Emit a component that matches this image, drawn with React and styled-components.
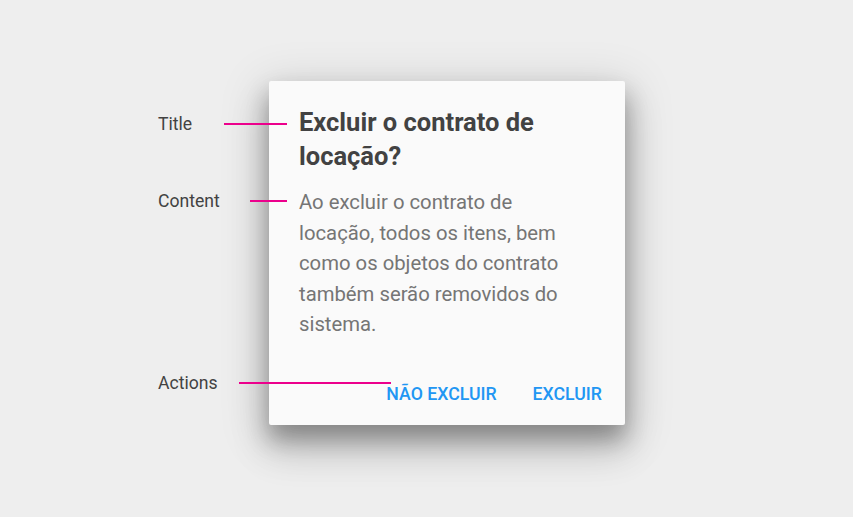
import React from 'react'
import styled, { createGlobalStyle } from 'styled-components'

const GlobalStyle = createGlobalStyle`
  html, body {
    margin: 0;
    background: #eeeeee;
    font-family: Roboto, "Noto Sans", sans-serif;
  }
`

const Page = styled.div`
  width: 853px;
  height: 517px;
  box-sizing: border-box;
  padding: 81px 0 0 269px;
`

const Stage = styled.div`
  position: relative;
  width: 356px;
`

const Dialog = styled.div`
  width: 356px;
  height: 344px;
  box-sizing: border-box;
  background: #fafafa;
  border-radius: 2px;
  box-shadow: 0 24px 38px 3px rgba(0, 0, 0, 0.14), 0 9px 46px 8px rgba(0, 0, 0, 0.12),
    0 14px 22px rgba(0, 0, 0, 0.28);
  display: flex;
  flex-direction: column;
  padding: 24px 23px 0 30px;
`

const Title = styled.h2`
  margin: 0;
  font-size: 25.5px;
  font-weight: 700;
  line-height: 34px;
  color: #424242;
`

const Content = styled.p`
  margin: 14px 0 0;
  font-size: 20.3px;
  line-height: 30.5px;
  color: #757575;
  padding-right: 20px;
`

const Actions = styled.div`
  margin-top: 42px;
  display: flex;
  justify-content: flex-end;
  gap: 36px;
`

const ActionButton = styled.button`
  border: 0;
  background: none;
  padding: 0;
  font-family: Roboto, sans-serif;
  font-size: 17.7px;
  font-weight: 500;
  line-height: 24px;
  color: #2196f3;
  text-transform: uppercase;
  cursor: pointer;
`

const Note = styled.div`
  position: absolute;
  left: -111px;
  top: ${p => p.top}px;
  height: 24px;
  display: flex;
  align-items: center;
`

const NoteLabel = styled.span`
  font-size: 17.6px;
  line-height: 24px;
  color: #424242;
  width: ${p => p.lead}px;
`

const NoteLine = styled.span`
  display: block;
  height: 2px;
  width: ${p => p.len}px;
  background: #ec008c;
`

const notes = [
  { label: 'Title', top: 31, lead: 66, len: 63 },
  { label: 'Content', top: 108, lead: 92, len: 37 },
  { label: 'Actions', top: 290, lead: 81, len: 152 },
]

export default function App() {
  return (
    <>
      <GlobalStyle />
      <Page>
        <Stage>
          <Dialog>
            <Title>Excluir o contrato de locação?</Title>
            <Content>
              Ao excluir o contrato de locação, todos os itens, bem como os objetos do contrato também serão removidos do sistema.
            </Content>
            <Actions>
              <ActionButton>Não excluir</ActionButton>
              <ActionButton>Excluir</ActionButton>
            </Actions>
          </Dialog>
          {notes.map(n => (
            <Note key={n.label} top={n.top}>
              <NoteLabel lead={n.lead}>{n.label}</NoteLabel>
              <NoteLine len={n.len} />
            </Note>
          ))}
        </Stage>
      </Page>
    </>
  )
}
